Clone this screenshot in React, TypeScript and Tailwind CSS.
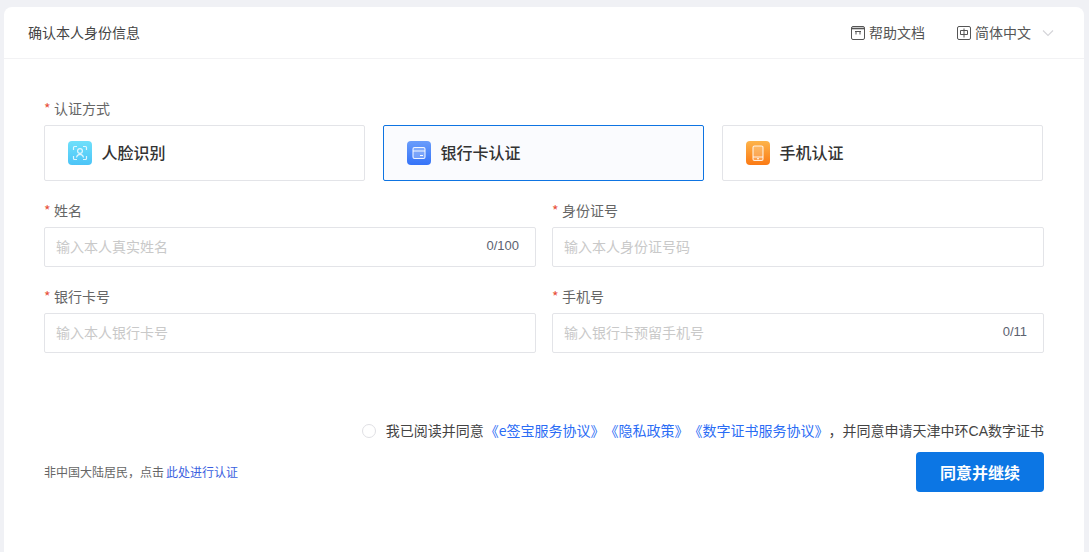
const fontStack = '"Noto Sans CJK SC", "Liberation Sans", sans-serif'

function FaceIcon() {
  return (
    <svg width="24" height="24" viewBox="0 0 24 24" className="rounded-[4px]">
      <defs>
        <linearGradient id="faceBg" x1="0" y1="0" x2="0" y2="1">
          <stop offset="0" stopColor="#6fe0fb" />
          <stop offset="1" stopColor="#4cc4f7" />
        </linearGradient>
      </defs>
      <rect width="24" height="24" fill="url(#faceBg)" />
      <g fill="none" stroke="#fff" strokeOpacity="0.8" strokeWidth="1.2">
        <path d="M5.5 9V6.5a1 1 0 0 1 1-1H9M15 5.5h2.5a1 1 0 0 1 1 1V9M18.5 15v2.5a1 1 0 0 1-1 1H15M9 18.5H6.5a1 1 0 0 1-1-1V15" />
        <circle cx="12" cy="10" r="2.4" />
        <path d="M8.5 16.5c.4-2 1.8-3.2 3.5-3.2s3.1 1.2 3.5 3.2" />
      </g>
    </svg>
  )
}

function CardIcon() {
  return (
    <svg width="24" height="24" viewBox="0 0 24 24" className="rounded-[4px]">
      <defs>
        <linearGradient id="cardBg" x1="0" y1="0" x2="0" y2="1">
          <stop offset="0" stopColor="#6a9dfb" />
          <stop offset="1" stopColor="#3573f8" />
        </linearGradient>
      </defs>
      <rect width="24" height="24" fill="url(#cardBg)" />
      <rect x="6" y="6.5" width="12" height="11" rx="1.5" fill="#fff" fillOpacity="0.25" stroke="#fff" strokeOpacity="0.9" strokeWidth="1.1" />
      <path d="M6 10h12" stroke="#fff" strokeOpacity="0.9" strokeWidth="1.1" />
      <path d="M13 14.5h3" stroke="#fff" strokeWidth="1.2" />
    </svg>
  )
}

function PhoneIcon() {
  return (
    <svg width="24" height="24" viewBox="0 0 24 24" className="rounded-[4px]">
      <defs>
        <linearGradient id="phoneBg" x1="0" y1="0" x2="0" y2="1">
          <stop offset="0" stopColor="#fdb44b" />
          <stop offset="1" stopColor="#fb7a14" />
        </linearGradient>
      </defs>
      <rect width="24" height="24" fill="url(#phoneBg)" />
      <rect x="7" y="5" width="10" height="14.5" rx="1.5" fill="#fff" fillOpacity="0.2" stroke="#fff" strokeOpacity="0.85" strokeWidth="1.1" />
      <path d="M7 16h10" stroke="#fff" strokeOpacity="0.85" strokeWidth="1" />
      <path d="M11 17.8h2" stroke="#fff" strokeWidth="1.1" />
    </svg>
  )
}

function DocIcon() {
  return (
    <svg width="14" height="14" viewBox="0 0 14 14" fill="none" stroke="#555" strokeWidth="1">
      <rect x="0.5" y="0.5" width="13" height="13" rx="1.5" />
      <path d="M0.5 2.5h13" strokeWidth="1.6" />
      <path d="M4 5.5h6M5 5.5v3M9 5.5v3" />
    </svg>
  )
}

function LangIcon() {
  return (
    <svg width="14" height="14" viewBox="0 0 14 14" fill="none" stroke="#555" strokeWidth="1">
      <rect x="0.5" y="0.5" width="13" height="13" rx="1.5" />
      <path d="M3.5 4.5h7v4h-7zM7 2.5v9" />
    </svg>
  )
}

function Label({ text }: { text: string }) {
  return (
    <div className="h-[20px] flex items-center text-[14px] leading-[20px] text-[#666] pb-[2px]">
      <span className="text-[#e8503a] mr-[5px] w-[5px]">*</span>
      {text}
    </div>
  )
}

function Field({
  label,
  placeholder,
  count,
}: {
  label: string
  placeholder: string
  count?: string
}) {
  return (
    <div className="flex flex-col gap-[6px]">
      <Label text={label} />
      <div className="h-[40px] border border-[#e3e4e8] rounded-[2px] flex items-center justify-between pl-[11px] pr-[16px] pb-[2px]">
        <span className="text-[14px] text-[#c9c9c9]">{placeholder}</span>
        {count && <span className="text-[13px] text-[#5c6270] font-['Liberation_Sans']">{count}</span>}
      </div>
    </div>
  )
}

function MethodTile({
  icon,
  title,
  active,
}: {
  icon: React.ReactNode
  title: string
  active?: boolean
}) {
  return (
    <div
      className={`h-[56px] rounded-[2px] border flex items-center gap-[10px] pl-[23px] ${
        active ? 'border-[#0e74e2] bg-[#fafbfe]' : 'border-[#e3e4e8] bg-white'
      }`}
    >
      {icon}
      <span className="text-[16px] font-medium text-[#333] pb-[2px] -ml-[0.5px]">{title}</span>
    </div>
  )
}

export default function App() {
  return (
    <div
      className="h-[552px] overflow-hidden bg-[#f0f1f5] pl-[4px] pr-[5px] pt-[7px]"
      style={{ fontFamily: fontStack }}
    >
      <div className="h-[545px] bg-white rounded-t-[8px]">
        <header className="h-[52px] border-b border-[#f2f2f4] flex items-center justify-between pl-[24px] pr-[30px]">
          <span className="text-[14px] text-[#444]">确认本人身份信息</span>
          <div className="flex items-center text-[14px] text-[#555]">
            <div className="flex items-center gap-[4px]">
              <DocIcon />
              <span>帮助文档</span>
            </div>
            <div className="flex items-center gap-[4px] ml-[32px]">
              <LangIcon />
              <span>简体中文</span>
            </div>
            <svg width="12" height="8" viewBox="0 0 12 8" fill="none" stroke="#d4d4d8" strokeWidth="1.1" className="ml-[11px]">
              <path d="M1 1.5l5 5 5-5" />
            </svg>
          </div>
        </header>

        <main className="pl-[40px] pr-[40px] pt-[40px]">
          <div className="flex flex-col gap-[6px]">
            <Label text="认证方式" />
            <div className="grid grid-cols-3 gap-[18px] pr-[1px]">
              <MethodTile icon={<FaceIcon />} title="人脸识别" />
              <MethodTile icon={<CardIcon />} title="银行卡认证" active />
              <MethodTile icon={<PhoneIcon />} title="手机认证" />
            </div>
          </div>

          <div className="grid grid-cols-2 gap-x-[16px] gap-y-[20px] mt-[20px]">
            <Field label="姓名" placeholder="输入本人真实姓名" count="0/100" />
            <Field label="身份证号" placeholder="输入本人身份证号码" />
            <Field label="银行卡号" placeholder="输入本人银行卡号" />
            <Field label="手机号" placeholder="输入银行卡预留手机号" count="0/11" />
          </div>

          <div className="mt-[68px] flex items-center justify-end h-[20px] text-[14px] text-[#444] [text-spacing-trim:space-all]">
            <span className="w-[14px] h-[14px] rounded-full border border-[#e0e0e4] mr-[10px]" />
            <span className="pb-[1px] flex whitespace-pre">
              <span className="mr-[1px]">我已阅读并同意</span>
              <span className="text-[#2a6cf5]">《e签宝服务协议》《隐私政策》《数字证书服务协议》</span>
              <span>
                ，并同意申请天津中环<span className="font-['Liberation_Sans']">CA</span>数字证书
              </span>
            </span>
          </div>

          <div className="mt-[11px] flex items-center justify-between">
            <span className="text-[12px] text-[#666]">
              非中国大陆居民，点击<span className="text-[#3b5fe0] ml-[2px]">此处进行认证</span>
            </span>
            <button className="w-[128px] h-[40px] rounded-[4px] bg-[#0c76e4] text-white text-[16px] font-bold">
              同意并继续
            </button>
          </div>
        </main>
      </div>
    </div>
  )
}
